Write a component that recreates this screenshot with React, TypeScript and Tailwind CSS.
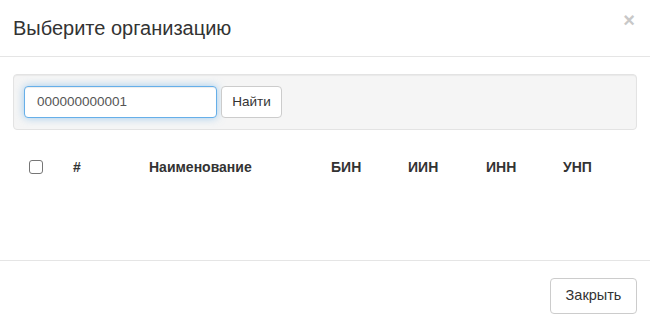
import React from "react";

export default function App() {
  return (
    <div
      className="w-[650px] h-[328px] bg-white text-[#333] overflow-hidden flex flex-col"
      style={{ fontFamily: '"Liberation Sans", Arial, sans-serif' }}
    >
      <div className="h-[57px] border-b border-[#e5e5e5] flex items-center justify-between pl-[13px] pr-[15px] shrink-0">
        <h4 className="text-[20px] leading-[26px] text-[#333]">Выберите организацию</h4>
        <span className="text-[#c8c8c8] text-[20px] font-bold leading-none -mt-[16px]">×</span>
      </div>
      <div className="px-[13px] pt-[17px] flex-1">
        <div className="h-[56px] bg-[#f5f5f5] border border-[#e3e3e3] rounded-[4px] flex items-center pl-[10px] gap-[4px] shadow-[inset_0_1px_1px_rgba(0,0,0,0.05)]">
          <div className="w-[193px] h-[32px] bg-white border border-[#66afe9] rounded-[4px] shadow-[inset_0_1px_1px_rgba(0,0,0,0.075),0_0_8px_rgba(102,175,233,0.6)] flex items-center pl-[12px] text-[13.5px] text-[#555]">
            000000000001
          </div>
          <button className="w-[61px] h-[32px] bg-white border border-[#ccc] rounded-[4px] text-[13.5px] text-[#333]">
            Найти
          </button>
        </div>
        <div className="mt-[29px] h-[16px] flex items-center text-[14px] font-bold text-[#333] relative">
          <div className="w-[14px] h-[14px] border border-[#767676] rounded-[3px] ml-[16px] bg-white" />
          <span className="absolute left-[60px]">#</span>
          <span className="absolute left-[136px]">Наименование</span>
          <span className="absolute left-[318px]">БИН</span>
          <span className="absolute left-[395px]">ИИН</span>
          <span className="absolute left-[473px]">ИНН</span>
          <span className="absolute left-[550px]">УНП</span>
        </div>
      </div>
      <div className="h-[68px] border-t border-[#e5e5e5] flex justify-end items-start pt-[17px] pr-[13px] shrink-0">
        <button className="w-[87px] h-[36px] bg-white border border-[#ccc] rounded-[4px] text-[14.5px] text-[#333]">
          Закрыть
        </button>
      </div>
    </div>
  );
}
